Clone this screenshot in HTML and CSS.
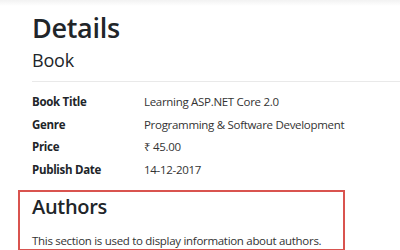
FILE: index.html
```html
<!DOCTYPE html>
<html lang="en">
<head>
  <meta charset="UTF-8" />
  <title>Details</title>
  <link rel="stylesheet" href="styles.css">
</head>
<body>
  <div class="page">
    <h1 class="title">Details</h1>
    <h4 class="subtitle">Book</h4>
    <hr class="rule" />
    <dl class="details">
      <dt>Book Title</dt>
      <dd>Learning ASP.NET Core 2.0</dd>
      <dt>Genre</dt>
      <dd>Programming &amp; Software Development</dd>
      <dt>Price</dt>
      <dd>₹ 45.00</dd>
      <dt>Publish Date</dt>
      <dd>14-12-2017</dd>
    </dl>
    <div class="authors">
      <h2>Authors</h2>
      <p>This section is used to display information about authors.</p>
    </div>
  </div>
</body>
</html>
```

FILE: styles.css
```css
* { box-sizing: border-box; margin: 0; padding: 0; }
body {
  background: linear-gradient(#f2f2f2, #fff 6px);
  color: #212529;
  font-family: 'Open Sans', 'Noto Sans', sans-serif;
  overflow: hidden;
}
.page {
  padding: 12px 0 0 32px;
}
.title {
  font-size: 27px;
  font-weight: 600;
  line-height: 32px;
  letter-spacing: -0.3px;
}
.subtitle {
  font-size: 18px;
  font-weight: 400;
  line-height: 24px;
  margin-top: 4px;
  letter-spacing: -0.2px;
}
.rule {
  border: none;
  border-top: 1px solid #e9e9e9;
  margin: 9px 0 9px;
}
.details {
  display: grid;
  grid-template-columns: 112px 1fr;
  font-size: 11.5px;
  line-height: 22.5px;
  letter-spacing: -0.3px;
}
.details dt { font-weight: 700; }
.details dd { color: #333; }
.authors {
  margin: 9px 0 0 -14px;
  width: 327px;
  border: 2px solid #d9534f;
  padding: 2px 12px 0;
}
.authors h2 {
  font-size: 20px;
  font-weight: 600;
  line-height: 26px;
  letter-spacing: -0.3px;
}
.authors p {
  font-size: 11.5px;
  line-height: 17px;
  margin-top: 12px;
  letter-spacing: -0.3px;
  color: #333;
}
```
